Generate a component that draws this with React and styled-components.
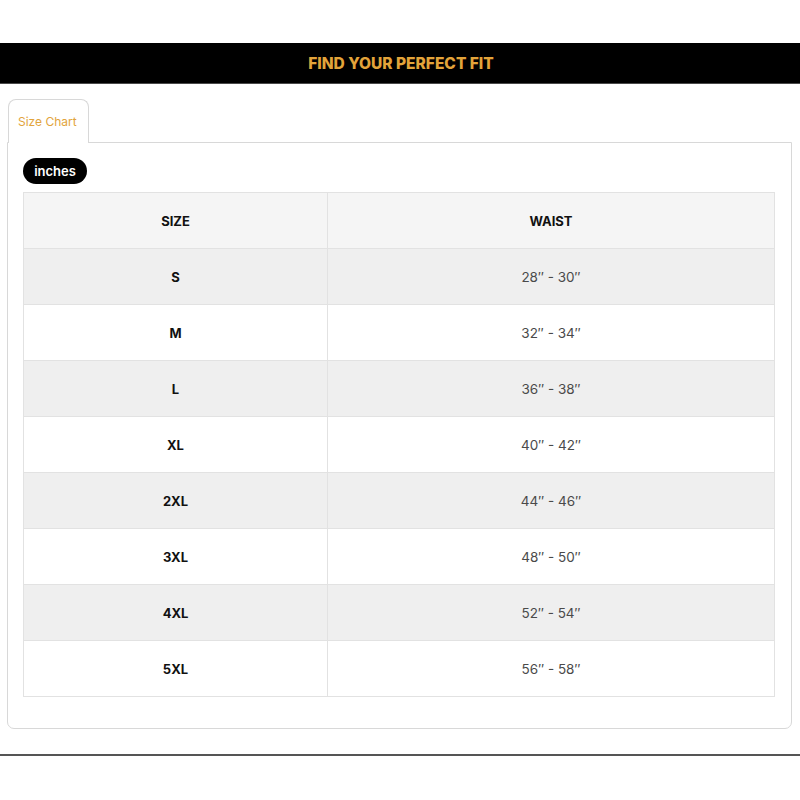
import React from "react";
import styled, { createGlobalStyle } from "styled-components";

const Global = createGlobalStyle`
  html, body { margin: 0; padding: 0; background: #fff; }
  body { font-family: Inter, "Noto Sans", sans-serif; }
`;

const Page = styled.div`
  width: 800px;
  padding-top: 43px;
`;

const Banner = styled.div`
  height: 40px;
  background: #000;
  border-bottom: 1px solid #4a4a4a;
  display: flex;
  align-items: center;
  justify-content: center;
  color: #e3a43a;
  font-family: Inter, sans-serif;
  font-weight: 800;
  font-size: 15.5px;
  letter-spacing: 0;
  padding-left: 2px;
`;

const Tabs = styled.div`
  margin: 15px 8px 0 7px;
`;

const TabBar = styled.div`
  display: flex;
  height: 43px;
`;

const Tab = styled.div`
  width: 81px;
  margin-left: 1px;
  box-sizing: border-box;
  border: 1px solid #d8d8d8;
  border-bottom: none;
  border-radius: 8px 8px 0 0;
  background: #fff;
  color: #e2a43c;
  font-size: 12px;
  padding-left: 9px;
  display: flex;
  align-items: center;
  position: relative;
  z-index: 1;
  margin-bottom: -1px;
  height: 44px;
`;

const Panel = styled.div`
  border: 1px solid #d8d8d8;
  border-radius: 0 0 7px 7px;
  padding: 15px 16px 31px 15px;
`;

const Pill = styled.div`
  display: inline-flex;
  align-items: center;
  justify-content: center;
  width: 64px;
  height: 26px;
  border-radius: 13px;
  background: #000;
  color: #fff;
  font-size: 13px;
  font-weight: 600;
`;

const Table = styled.div`
  margin-top: 8px;
  display: grid;
  grid-template-columns: 304px 1fr;
  border-top: 1px solid #e2e2e2;
  border-left: 1px solid #e2e2e2;
`;

const Cell = styled.div`
  height: 56px;
  box-sizing: border-box;
  border-right: 1px solid #e2e2e2;
  border-bottom: 1px solid #e2e2e2;
  display: flex;
  align-items: center;
  justify-content: center;
  background: ${(p) => (p.$head ? "#f5f5f5" : p.$shade ? "#efefef" : "#fff")};
  color: ${(p) => (p.$bold ? "#111" : "#4a4a4a")};
  font-weight: ${(p) => (p.$bold ? 700 : 400)};
  font-size: ${(p) => (p.$bold ? "13px" : "13.5px")};
`;

const Rule = styled.div`
  margin-top: 25px;
  height: 2px;
  background: #555;
`;

const rows = [
  ["S", "28\u2033 - 30\u2033"],
  ["M", "32\u2033 - 34\u2033"],
  ["L", "36\u2033 - 38\u2033"],
  ["XL", "40\u2033 - 42\u2033"],
  ["2XL", "44\u2033 - 46\u2033"],
  ["3XL", "48\u2033 - 50\u2033"],
  ["4XL", "52\u2033 - 54\u2033"],
  ["5XL", "56\u2033 - 58\u2033"],
];

export default function App() {
  return (
    <Page>
      <Global />
      <Banner>FIND YOUR PERFECT FIT</Banner>
      <Tabs>
        <TabBar>
          <Tab>Size Chart</Tab>
        </TabBar>
        <Panel>
          <Pill>inches</Pill>
          <Table>
            <Cell $head $bold>SIZE</Cell>
            <Cell $head $bold>WAIST</Cell>
            {rows.map(([s, w], i) => (
              <React.Fragment key={s}>
                <Cell $bold $shade={i % 2 === 0}>{s}</Cell>
                <Cell $shade={i % 2 === 0}>{w}</Cell>
              </React.Fragment>
            ))}
          </Table>
        </Panel>
      </Tabs>
      <Rule />
    </Page>
  );
}
